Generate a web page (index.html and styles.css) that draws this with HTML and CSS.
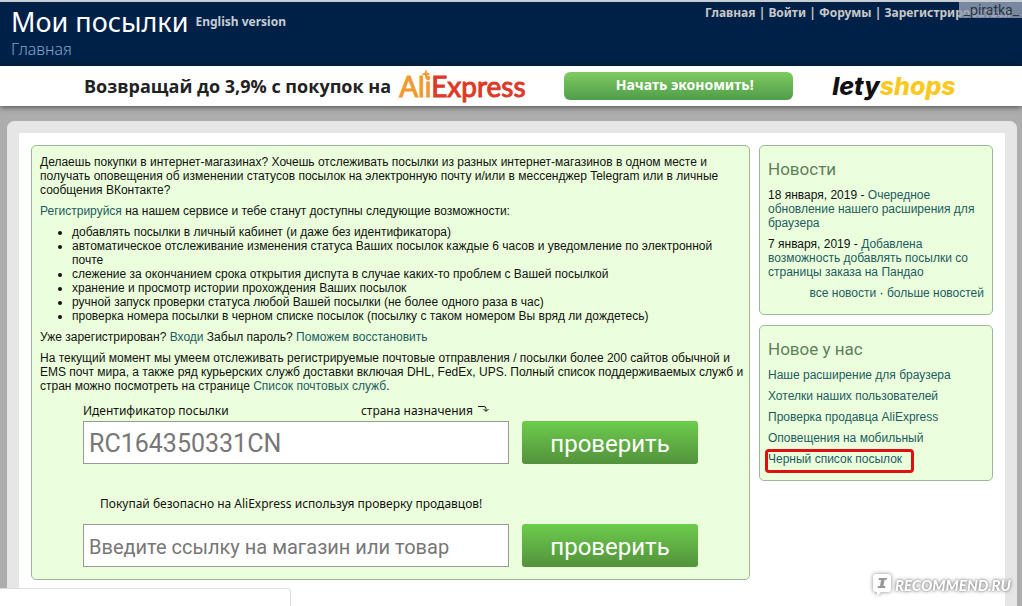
FILE: index.html
```html
<!DOCTYPE html>
<html lang="ru">
<head>
<meta charset="utf-8">
<title>Мои посылки</title>
<link rel="stylesheet" href="styles.css">
</head>
<body>
<header class="header">
  <div class="brand">
    <div class="brand-row">
      <h1 class="site-title">Мои посылки</h1>
      <a class="lang" href="#">English version</a>
    </div>
    <div class="crumb">Главная</div>
  </div>
  <nav class="user-nav">
    <a href="#">Главная</a> | <a href="#">Войти</a> | <a href="#">Форумы</a> | <a href="#">Зарегистрироваться</a>
  </nav>
  <div class="name-tag">_piratka_</div>
</header>

<section class="banner">
  <span class="banner-text">Возвращай до 3,9% с покупок на</span>
  <span class="ali"><span class="ali-gold">Ali</span><span class="ali-red">Express</span><svg class="spark" viewBox="0 0 10 10" aria-hidden="true"><path d="M5 0l1.200 3.800L10 5 6.200 6.200 5 10 3.800 6.200 0 5l3.800-1.200z" fill="#f2992e"/></svg></span>
  <button class="save-btn" type="button">Начать экономить!</button>
  <span class="lety"><span class="lety-dark">lety</span><span class="lety-gold">shops</span></span>
</section>

<div class="frame">
  <main class="card main">
    <p>Делаешь покупки в интернет-магазинах? Хочешь отслеживать посылки из разных интернет-магазинов в одном месте и получать оповещения об изменении статусов посылок на электронную почту и/или в мессенджер Telegram или в личные сообщения ВКонтакте?</p>
    <p><a href="#">Регистрируйся</a> на нашем сервисе и тебе станут доступны следующие возможности:</p>
    <ul class="features">
      <li>добавлять посылки в личный кабинет (и даже без идентификатора)</li>
      <li>автоматическое отслеживание изменения статуса Ваших посылок каждые 6 часов и уведомление по электронной почте</li>
      <li>слежение за окончанием срока открытия диспута в случае каких-то проблем с Вашей посылкой</li>
      <li>хранение и просмотр истории прохождения Ваших посылок</li>
      <li>ручной запуск проверки статуса любой Вашей посылки (не более одного раза в час)</li>
      <li>проверка номера посылки в черном списке посылок (посылку с таком номером Вы вряд ли дождетесь)</li>
    </ul>
    <p>Уже зарегистрирован? <a href="#">Входи</a> Забыл пароль? <a href="#">Поможем восстановить</a></p>
    <p>На текущий момент мы умеем отслеживать регистрируемые почтовые отправления / посылки более 200 сайтов обычной и EMS почт мира, а также ряд курьерских служб доставки включая DHL, FedEx, UPS. Полный список поддерживаемых служб и стран можно посмотреть на странице <a href="#">Список почтовых служб</a>.</p>

    <form class="check">
      <div class="check-labels">
        <label for="parcel">Идентификатор посылки</label>
        <span class="country">страна назначения
          <svg class="turn" viewBox="0 0 11 8" aria-hidden="true"><path d="M0 1.500h6q2 0 2 2V6M5.500 4L8 6.500 10.500 4" fill="none" stroke="#111"/></svg>
        </span>
      </div>
      <div class="check-row">
        <input class="field field-id" id="parcel" type="text" placeholder="RC164350331CN">
        <button class="go" type="button">проверить</button>
      </div>
    </form>
    <form class="check check-shop">
      <label class="shop-label" for="shop">Покупай безопасно на AliExpress используя проверку продавцов!</label>
      <div class="check-row">
        <input class="field" id="shop" type="text" placeholder="Введите ссылку на магазин или товар">
        <button class="go" type="button">проверить</button>
      </div>
    </form>
  </main>

  <aside class="side">
    <section class="card side-card">
      <h2>Новости</h2>
      <p>18 января, 2019 - <a href="#">Очередное обновление нашего расширения для браузера</a></p>
      <p>7 января, 2019 - <a href="#">Добавлена возможность добавлять посылки со страницы заказа на Пандао</a></p>
      <p class="more"><a href="#">все новости</a> · <a href="#">больше новостей</a></p>
    </section>
    <section class="card side-card">
      <h2>Новое у нас</h2>
      <p><a href="#">Наше расширение для браузера</a></p>
      <p><a href="#">Хотелки наших пользователей</a></p>
      <p><a href="#">Проверка продавца AliExpress</a></p>
      <p><a href="#">Оповещения на мобильный</a></p>
      <p><a class="marked" href="#">Черный список посылок</a></p>
    </section>
  </aside>
</div>

<div class="status"></div>
<div class="watermark">
  <svg class="bubble" viewBox="0 0 20 24" aria-hidden="true"><path d="M4 1h12q3 0 3 3v12q0 3-3 3h-7l-4 4v-4h-1q-3 0-3-3V4q0-3 3-3z" fill="#fff"/><path d="M7 5h8l-.500 2h-2l-1 6h2l-.500 2H5.500l.500-2h2l1-6H6.500z" fill="#999"/></svg>
  <span>RECOMMEND.RU</span>
</div>
</body>
</html>
```
FILE: styles.css
```css
* { box-sizing: border-box; }
body {
  margin: 0;
  min-height: 100vh;
  display: flex;
  flex-direction: column;
  background: #adadad;
  color: #111;
  font: 12px/14px "Liberation Sans", sans-serif;
}
a { color: #1d5b62; text-decoration: none; }
p { margin: 0 0 7px; }

.header {
  position: relative;
  display: flex;
  justify-content: space-between;
  height: 66px;
  padding: 4px 11px 0;
  border-top: 2px solid #c9ccd0;
  background: #002147;
}
.brand-row { display: flex; align-items: center; gap: 7px; }
.site-title { margin: 0; color: #fff; font: 400 27px/32px "Noto Sans", sans-serif; }
.lang { color: #c5cdd6; font: 700 12px/14px "Noto Sans", sans-serif; }
.crumb { color: #7fa3cf; font: 300 16px/22px "Noto Sans", sans-serif; }
.user-nav { color: #c8c8c8; font: 700 12px/14px "Noto Sans", sans-serif; }
.user-nav a { color: #c8c8c8; }
.name-tag {
  position: absolute;
  top: 0;
  right: 0;
  padding: 0 3px 0 5px;
  background: rgba(150, 163, 184, 0.8);
  color: #2c3440;
  font: 14px/16px Roboto, sans-serif;
}

.banner {
  position: relative;
  display: flex;
  align-items: center;
  height: 40px;
  padding-left: 84px;
  background: #fff;
  box-shadow: 0 1px 6px rgba(0, 0, 0, 0.6);
}
.banner-text { color: #222; font: 700 18px/24px "Open Sans", sans-serif; }
.ali {
  position: relative;
  width: 128px;
  margin: 0 37px 0 8px;
  font: 400 28px/34px Lato, sans-serif;
  -webkit-text-stroke: 1px;
}
.ali-gold { color: #f2992e; }
.ali-red { color: #dc3a27; }
.spark { position: absolute; top: 0; left: 22px; width: 10px; height: 10px; }
.save-btn {
  width: 229px;
  height: 28px;
  padding: 0 0 2px 12px;
  border: 0;
  border-radius: 6px;
  background: linear-gradient(#7fcb62, #4f9d4a);
  color: #fff;
  font: 700 14px/20px "Noto Sans", sans-serif;
}
.lety { margin-left: 39px; font: italic 800 25px/30px Inter, sans-serif; }
.lety-dark { color: #111; }
.lety-gold { color: #f9c922; }

.frame {
  flex: 1;
  display: flex;
  align-items: flex-start;
  gap: 9px;
  margin: 15px 5px 0 7px;
  padding: 12px;
  border: 12px solid #e6e6e6;
  border-bottom: 0;
  border-radius: 8px 8px 0 0;
  background: #fff;
}
.card {
  border: 1px solid #9cb79a;
  border-radius: 5px;
  background: #ebffdc;
}
.main { flex: 1; padding: 9px 4px 12px 8px; }
.features { margin: 0 0 7px; padding: 0 0 0 32px; }

.check { margin: 11px 47px 0 43px; }
.check-labels {
  display: flex;
  justify-content: space-between;
  width: 426px;
  margin-bottom: 3px;
  padding-right: 20px;
}
.check label, .country { font-family: "Noto Sans", sans-serif; }
.turn { width: 11px; height: 8px; margin-left: 2px; vertical-align: 2px; }
.check-row { display: flex; gap: 13px; }
.field {
  flex: 1;
  min-width: 0;
  height: 43px;
  padding: 2px 5px 0;
  border: 1px solid #999;
  background: #fff;
  font: 20px/28px Roboto, sans-serif;
}
.field::placeholder { color: #777; }
.field-id { font-size: 25px; }
.go {
  width: 176px;
  height: 43px;
  padding: 3px 0 0;
  border: 0;
  border-radius: 3px;
  background: linear-gradient(#6ccc4c, #53923c);
  color: #fff;
  font: 24px/40px Roboto, sans-serif;
}
.check-shop { margin-top: 33px; }
.shop-label { display: block; margin: 0 0 13px 17px; }

.side { display: flex; flex-direction: column; gap: 10px; width: 234px; }
.side-card { padding: 13px 8px 7px; }
.side-card h2 { margin: 0 0 8px; color: #5e7f5c; font: 400 17px/21px Roboto, sans-serif; }
.more { text-align: right; }
.marked { padding: 0 9px 4px 0; outline: 3px solid #e01010; border-radius: 1px; }

.status {
  position: fixed;
  left: 0;
  bottom: 0;
  width: 291px;
  height: 18px;
  border: 1px solid #ddd;
  border-width: 1px 1px 0 0;
  border-radius: 0 4px 0 0;
  background: #fff;
}
.watermark {
  position: fixed;
  right: 11px;
  bottom: 9px;
  display: flex;
  align-items: center;
  gap: 3px;
  color: #fff;
  font: italic 900 15px/24px Lato, sans-serif;
  text-shadow: 0 0 2px #777, 0 0 4px #888;
}
.bubble { width: 20px; height: 24px; filter: drop-shadow(0 0 2px #888); }
```
